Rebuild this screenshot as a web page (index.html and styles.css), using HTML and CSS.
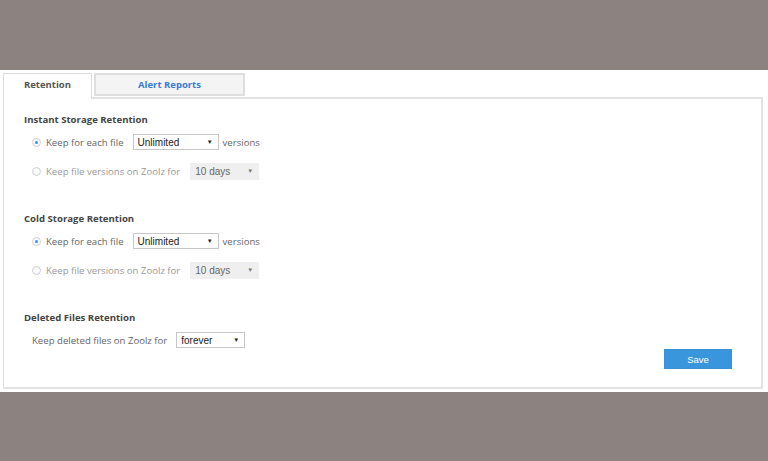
FILE: index.html
```html
<!DOCTYPE html>
<html>
<head>
<meta charset="utf-8">
<link rel="stylesheet" href="styles.css">
</head>
<body>
<div class="top"></div>
<div class="band">
  <div class="tabs">
    <div class="tab active">Retention</div>
    <div class="tab other">Alert Reports</div>
    <div class="tab-fill"></div>
  </div>
  <div class="panel">
    <section class="sect">
      <h3 class="head">Instant Storage Retention</h3>
      <div class="row">
        <span class="radio on"></span>
        <span class="lbl">Keep for each file</span>
        <span class="sel w86">Unlimited<i class="arr">▼</i></span>
        <span class="lbl after">versions</span>
      </div>
      <div class="row off">
        <span class="radio"></span>
        <span class="lbl">Keep file versions on Zoolz for</span>
        <span class="sel dis w69">10 days<i class="arr">▼</i></span>
      </div>
    </section>
    <section class="sect">
      <h3 class="head">Cold Storage Retention</h3>
      <div class="row">
        <span class="radio on"></span>
        <span class="lbl">Keep for each file</span>
        <span class="sel w86">Unlimited<i class="arr">▼</i></span>
        <span class="lbl after">versions</span>
      </div>
      <div class="row off">
        <span class="radio"></span>
        <span class="lbl">Keep file versions on Zoolz for</span>
        <span class="sel dis w69">10 days<i class="arr">▼</i></span>
      </div>
    </section>
    <section class="sect last">
      <h3 class="head">Deleted Files Retention</h3>
      <div class="row plain">
        <span class="lbl">Keep deleted files on Zoolz for</span>
        <span class="sel w69">forever<i class="arr">▼</i></span>
      </div>
    </section>
    <div class="actions"><button class="save">Save</button></div>
  </div>
</div>
<div class="bottom"></div>
</body>
</html>
```
FILE: styles.css
```css
* { box-sizing: border-box; }
html, body { margin: 0; padding: 0; }
body {
  background: #8c8381;
  font-family: "Open Sans", "Noto Sans", sans-serif;
  width: 768px;
  height: 461px;
  overflow: hidden;
}
.top { height: 70px; }
.band {
  background: #fff;
  height: 322px;
  padding: 3px 5px 0 3px;
}
.tabs {
  display: flex;
  height: 25px;
  align-items: flex-start;
}
.tab {
  font-size: 9.5px;
  font-weight: 700;
  display: flex;
  align-items: center;
  justify-content: center;
}
.tab.active {
  width: 89px;
  height: 26px;
  border: 1px solid #dcdcdc;
  border-bottom: none;
  background: #fff;
  color: #555;
  position: relative;
  z-index: 1;
  padding-bottom: 4px;
}
.tab.other {
  margin-left: 2px;
  width: 151px;
  height: 23px;
  border: 2px solid #dedede;
  background: #f4f4f4;
  color: #3a7ad4;
}
.tab-fill { flex: 1; }
.panel {
  border: 2px solid #e2e2e2;
  border-left: 1px solid #dcdcdc;
  height: 292px;
  margin-top: -1px;
  padding: 14px 0 0 20px;
  position: relative;
}
.head {
  margin: 0 0 6px;
  font-size: 9.6px;
  font-weight: 700;
  color: #444;
  line-height: 14px;
  height: 14px;
}
.sect { margin-bottom: 32px; }
.sect.last { margin-bottom: 0; }
.row {
  display: flex;
  align-items: center;
  height: 18px;
  padding-left: 8px;
  margin-bottom: 11px;
  font-size: 9.6px;
  color: #666;
}
.row.off { color: #999; margin-bottom: 0; }
.row.plain { padding-left: 8px; margin-bottom: 0; }
.radio {
  width: 9px;
  height: 9px;
  border-radius: 50%;
  border: 1px solid #cfcfcf;
  background: #fafafa;
  margin-right: 5px;
  position: relative;
  flex: none;
}
.radio.on::after {
  content: "";
  position: absolute;
  left: 2px; top: 2px;
  width: 3px; height: 3px;
  border-radius: 50%;
  background: #3a8ee6;
}
.lbl { white-space: nowrap; }
.lbl.after { margin-left: 4px; }
.sel {
  font-family: "Liberation Sans", Arial, sans-serif;
  font-size: 10px;
  color: #222;
  height: 16px;
  border: 1px solid #c8c8c8;
  background: #fff;
  display: flex;
  align-items: center;
  justify-content: space-between;
  padding: 0 5px 0 4px;
  margin-left: 9px;
}
.sel.dis {
  background: #efefef;
  border-color: #efefef;
  color: #666;
  height: 17px;
  margin-left: 10px;
}
.w86 { width: 86px; }
.w69 { width: 69px; }
.arr { font-style: normal; font-size: 6px; color: #222; }
.sel.dis .arr { color: #777; }
.actions {
  display: flex;
  justify-content: flex-end;
  padding-right: 29px;
}
.save {
  width: 68px;
  height: 20px;
  background: #3996dc;
  color: #fff;
  border: 1px solid #3a90d4;
  font-family: "Liberation Sans", Arial, sans-serif;
  font-size: 9.5px;
  padding: 0;
}
.bottom { height: 69px; }
```
